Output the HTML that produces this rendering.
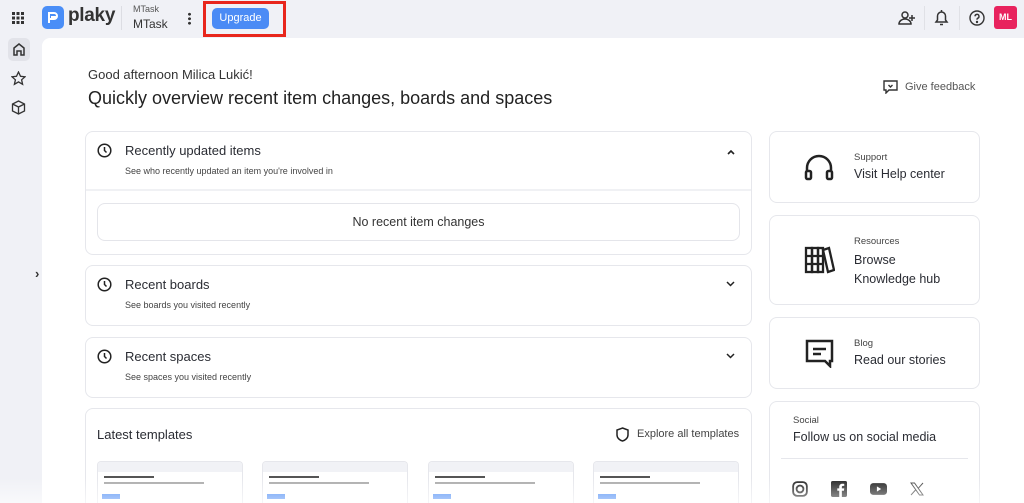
<!DOCTYPE html><html><head><meta charset="utf-8"><style>
*{box-sizing:border-box;margin:0;padding:0}
html,body{width:1024px;height:503px;overflow:hidden}
body{background:#f0f1f6;font-family:"Liberation Sans",sans-serif;color:#2a2c33;position:relative}
.a{position:absolute}
.card{position:absolute;background:#fff;border:1px solid #e6e7ec;border-radius:8px}
svg{display:block}
.thumb{position:absolute;top:461px;width:146px;height:42px;border:1px solid #e6e7ec;border-bottom:none;border-radius:4px 4px 0 0;background:#fff;overflow:hidden}
.thumb .bar{height:10px;background:#f1f2f6}
</style></head><body>
<svg class="a" style="left:12px;top:12px" width="12" height="12" viewBox="0 0 12 12" fill="#333"><g><rect x="0" y="0" width="3" height="3"/><rect x="4.5" y="0" width="3" height="3"/><rect x="9" y="0" width="3" height="3"/><rect x="0" y="4.5" width="3" height="3"/><rect x="4.5" y="4.5" width="3" height="3"/><rect x="9" y="4.5" width="3" height="3"/><rect x="0" y="9" width="3" height="3"/><rect x="4.5" y="9" width="3" height="3"/><rect x="9" y="9" width="3" height="3"/></g></svg>
<div class="a" style="left:42px;top:6px;width:22px;height:23px;background:#4a8ef7;border-radius:5px"><svg width="22" height="23" viewBox="0 0 22 23"><path d="M7 17V7h5a3 3 0 0 1 0 6H7M9 11h5" stroke="#fff" stroke-width="2" fill="none"/></svg></div>
<div class="a" style="left:68px;top:5px;font-size:19px;font-weight:bold;color:#333;letter-spacing:-.3px">plaky</div>
<div class="a" style="left:121px;top:6px;width:1px;height:24px;background:#dcdde3"></div>
<div class="a" style="left:133px;top:4px;font-size:9px;color:#555">MTask</div>
<div class="a" style="left:133px;top:17px;font-size:12px;color:#333">MTask</div>
<div class="a" style="left:188px;top:12px;width:3px;height:13px;background:radial-gradient(circle,#333 1.3px,transparent 1.6px) 0 0/3px 4.5px"></div>
<div class="a" style="left:212px;top:8px;width:57px;height:21px;background:#4b8bf5;border-radius:5px;color:#fff;font-size:11px;text-align:center;line-height:21px">Upgrade</div>
<div class="a" style="left:203px;top:1px;width:83px;height:36px;border:3px solid #e8261c"></div>
<svg class="a" style="left:898px;top:10px" width="18" height="16" viewBox="0 0 18 16" fill="none" stroke="#333" stroke-width="1.5"><circle cx="7" cy="5" r="3"/><path d="M1 14c0-3 3-5 6-5s6 2 6 5zM14 5v6M11 8h6"/></svg>
<div class="a" style="left:924px;top:6px;width:1px;height:24px;background:#e0e1e6"></div>
<svg class="a" style="left:934px;top:9px" width="15" height="17" viewBox="0 0 15 17" fill="none" stroke="#333" stroke-width="1.5"><path d="M2 13h11l-1.5-2V7a4 4 0 0 0-8 0v4zM6 15.5h3M7.5 1v2"/></svg>
<div class="a" style="left:959px;top:6px;width:1px;height:24px;background:#e0e1e6"></div>
<svg class="a" style="left:969px;top:10px" width="16" height="16" viewBox="0 0 16 16" fill="none" stroke="#333" stroke-width="1.4"><circle cx="8" cy="8" r="7"/><path d="M6 6.3a2 2 0 1 1 2.5 2c-.5.2-.5.7-.5 1.5"/><circle cx="8" cy="12" r=".5" fill="#333"/></svg>
<div class="a" style="left:994px;top:6px;width:23px;height:23px;background:#e8235e;border-radius:3px;color:#fff;font-size:9px;font-weight:bold;text-align:center;line-height:23px">ML</div>
<div class="a" style="left:8px;top:38px;width:22px;height:23px;background:#e2e3e9;border-radius:5px"></div>
<svg class="a" style="left:12px;top:42px" width="14" height="14" viewBox="0 0 14 14" fill="none" stroke="#333" stroke-width="1.5"><path d="M2 6l5-4 5 4v7H9V9H5v4H2z"/></svg>
<svg class="a" style="left:11px;top:71px" width="15" height="15" viewBox="0 0 15 15" fill="none" stroke="#333" stroke-width="1.3"><path d="M7.5 1l2 4.3 4.5.5-3.4 3 1 4.5-4.1-2.4-4.1 2.4 1-4.5L1 5.8l4.5-.5z"/></svg>
<svg class="a" style="left:11px;top:100px" width="15" height="15" viewBox="0 0 15 15" fill="none" stroke="#333" stroke-width="1.3"><path d="M7.5 1l6 3v7l-6 3-6-3V4zM1.5 4l6 3 6-3M7.5 7v7"/></svg>
<div class="a" style="left:35px;top:266px;font-size:13px;color:#333;font-weight:bold">›</div>
<div class="a" style="left:42px;top:38px;width:982px;height:465px;background:#fff;border-top-left-radius:8px"></div>
<div class="a" style="left:88px;top:67px;font-size:13px;color:#333">Good afternoon Milica Lukić!</div>
<div class="a" style="left:88px;top:88px;font-size:18px;color:#222">Quickly overview recent item changes, boards and spaces</div>
<svg class="a" style="left:883px;top:80px" width="15" height="14" viewBox="0 0 15 14" fill="none" stroke="#333" stroke-width="1.4"><path d="M1 1h13v9H6l-3 3V10H1z"/><path d="M5.5 5l2 2 2-2" /></svg>
<div class="a" style="left:905px;top:81px;font-size:11px;color:#555">Give feedback</div>

<div class="card" style="left:85px;top:131px;width:667px;height:124px"></div>
<svg class="a" style="left:97px;top:143px" width="15" height="15" viewBox="0 0 15 15" fill="none" stroke="#222" stroke-width="1.5"><circle cx="7.5" cy="7.5" r="6.3"/><path d="M7.5 4v3.5l2 2"/></svg>
<div class="a" style="left:125px;top:143px;font-size:13px">Recently updated items</div>
<div class="a" style="left:125px;top:166px;font-size:9px;color:#444">See who recently updated an item you're involved in</div>
<svg class="a" style="left:727px;top:150px" width="8" height="5" viewBox="0 0 8 5" fill="none" stroke="#222" stroke-width="1.6"><path d="M1 4l3-3 3 3"/></svg>
<div class="a" style="left:86px;top:189px;width:665px;height:2px;background:#f0f1f4"></div>
<div class="a" style="left:97px;top:203px;width:643px;height:38px;border:1px solid #e4e5ea;border-radius:8px;text-align:center;line-height:36px;font-size:12.5px;color:#333">No recent item changes</div>

<div class="card" style="left:85px;top:265px;width:667px;height:61px"></div>
<svg class="a" style="left:97px;top:277px" width="15" height="15" viewBox="0 0 15 15" fill="none" stroke="#222" stroke-width="1.5"><circle cx="7.5" cy="7.5" r="6.3"/><path d="M7.5 4v3.5l2 2"/></svg>
<div class="a" style="left:125px;top:277px;font-size:13px">Recent boards</div>
<div class="a" style="left:125px;top:300px;font-size:9px;color:#444">See boards you visited recently</div>
<svg class="a" style="left:726px;top:281px" width="9" height="6" viewBox="0 0 9 6" fill="none" stroke="#222" stroke-width="1.5"><path d="M1 1l3.5 3.5L8 1"/></svg>

<div class="card" style="left:85px;top:337px;width:667px;height:61px"></div>
<svg class="a" style="left:97px;top:349px" width="15" height="15" viewBox="0 0 15 15" fill="none" stroke="#222" stroke-width="1.5"><circle cx="7.5" cy="7.5" r="6.3"/><path d="M7.5 4v3.5l2 2"/></svg>
<div class="a" style="left:125px;top:349px;font-size:13px">Recent spaces</div>
<div class="a" style="left:125px;top:372px;font-size:9px;color:#444">See spaces you visited recently</div>
<svg class="a" style="left:726px;top:353px" width="9" height="6" viewBox="0 0 9 6" fill="none" stroke="#222" stroke-width="1.5"><path d="M1 1l3.5 3.5L8 1"/></svg>

<div class="card" style="left:85px;top:408px;width:667px;height:110px"></div>
<div class="a" style="left:97px;top:427px;font-size:13px">Latest templates</div>
<svg class="a" style="left:616px;top:427px" width="13" height="15" viewBox="0 0 13 15" fill="none" stroke="#222" stroke-width="1.5"><path d="M6.5 1L12 3v5c0 3-3 5.5-5.5 6C4 13.5 1 11 1 8V3z"/></svg>
<div class="a" style="left:637px;top:428px;font-size:11px;color:#444">Explore all templates</div>
<div class="thumb" style="left:97px"><div class="bar"></div><div style="margin:4px 6px;height:2px;width:50px;background:#555"></div><div style="margin:4px 6px;height:2px;width:100px;background:#aaa"></div><div style="margin:10px 4px;height:5px;width:18px;background:#4b8bf5"></div></div>
<div class="thumb" style="left:262px"><div class="bar"></div><div style="margin:4px 6px;height:2px;width:50px;background:#555"></div><div style="margin:4px 6px;height:2px;width:100px;background:#aaa"></div><div style="margin:10px 4px;height:5px;width:18px;background:#4b8bf5"></div></div>
<div class="thumb" style="left:428px"><div class="bar"></div><div style="margin:4px 6px;height:2px;width:50px;background:#555"></div><div style="margin:4px 6px;height:2px;width:100px;background:#aaa"></div><div style="margin:10px 4px;height:5px;width:18px;background:#4b8bf5"></div></div>
<div class="thumb" style="left:593px"><div class="bar"></div><div style="margin:4px 6px;height:2px;width:50px;background:#555"></div><div style="margin:4px 6px;height:2px;width:100px;background:#aaa"></div><div style="margin:10px 4px;height:5px;width:18px;background:#4b8bf5"></div></div>

<div class="card" style="left:769px;top:131px;width:211px;height:72px"></div>
<svg class="a" style="left:804px;top:154px" width="30" height="27" viewBox="0 0 30 27" fill="none" stroke="#222" stroke-width="2.5"><path d="M3 18v-4a12 12 0 0 1 24 0v4"/><rect x="2" y="17" width="5" height="8" rx="1.5"/><rect x="23" y="17" width="5" height="8" rx="1.5"/></svg>
<div class="a" style="left:854px;top:152px;font-size:9.5px;color:#444">Support</div>
<div class="a" style="left:854px;top:167px;font-size:12.5px">Visit Help center</div>

<div class="card" style="left:769px;top:215px;width:211px;height:90px"></div>
<svg class="a" style="left:804px;top:246px" width="31" height="28" viewBox="0 0 31 28" fill="none" stroke="#222" stroke-width="2.3"><rect x="2" y="2" width="6" height="24"/><rect x="8" y="2" width="6" height="24"/><rect x="14" y="2" width="5" height="24"/><path d="M19 4l6-2 5 22-6 2zM2 10h17M2 18h17"/></svg>
<div class="a" style="left:854px;top:236px;font-size:9.5px;color:#444">Resources</div>
<div class="a" style="left:854px;top:251px;font-size:12.5px;line-height:19px">Browse<br>Knowledge hub</div>

<div class="card" style="left:769px;top:317px;width:211px;height:72px"></div>
<svg class="a" style="left:804px;top:338px" width="31" height="30" viewBox="0 0 31 30" fill="none" stroke="#222" stroke-width="2.5"><path d="M3 3h25v20h-2v5l-5-5H3z"/><path d="M9 11h13M9 16h8"/></svg>
<div class="a" style="left:854px;top:338px;font-size:9.5px;color:#444">Blog</div>
<div class="a" style="left:854px;top:353px;font-size:12.5px">Read our stories</div>

<div class="card" style="left:769px;top:401px;width:211px;height:120px"></div>
<div class="a" style="left:793px;top:415px;font-size:9.5px;color:#444">Social</div>
<div class="a" style="left:793px;top:430px;font-size:12.5px">Follow us on social media</div>
<div class="a" style="left:781px;top:458px;width:187px;height:1px;background:#e6e7ec"></div>
<svg class="a" style="left:792px;top:481px" width="16" height="16" viewBox="0 0 14 14" fill="none" stroke="#222" stroke-width="1.6"><rect x="1" y="1" width="12" height="12" rx="3.5"/><circle cx="7" cy="7" r="3"/></svg>
<svg class="a" style="left:831px;top:481px" width="16" height="16" viewBox="0 0 14 14"><rect width="14" height="14" rx="1.5" fill="#222"/><path d="M9.5 14V8.5h1.8l.3-2H9.5V5.3c0-.6.2-1 1-1h1.1V2.5c-.3 0-1-.1-1.7-.1-1.6 0-2.7 1-2.7 2.8v1.3H5.5v2h1.7V14z" fill="#fff"/></svg>
<svg class="a" style="left:870px;top:483px" width="17" height="12" viewBox="0 0 16 11"><rect width="16" height="11" rx="3" fill="#222"/><path d="M6.5 3v5l4-2.5z" fill="#fff"/></svg>
<svg class="a" style="left:910px;top:482px" width="14" height="14" viewBox="0 0 14 14" fill="none" stroke="#444" stroke-width="1"><path d="M1 1h3.5l8.5 12H9.5zM13 1L8 6.6M1 13l5-5.6"/></svg>
<div class="a" style="left:0;top:478px;width:1024px;height:25px;background:linear-gradient(rgba(255,255,255,0),rgba(255,255,255,.6))"></div>
</body></html>
